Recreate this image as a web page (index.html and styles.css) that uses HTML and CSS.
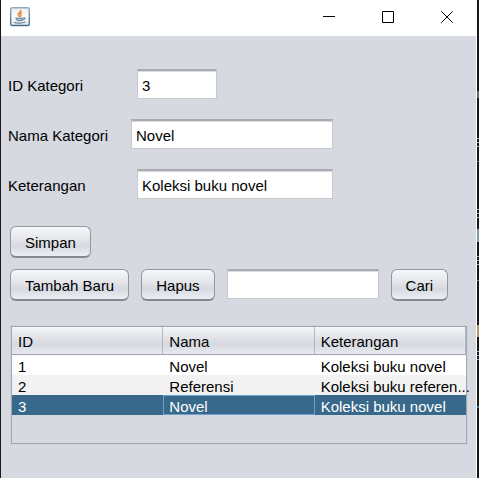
FILE: index.html
```html
<!DOCTYPE html>
<html lang="id">
<head>
<meta charset="utf-8">
<title>Kategori</title>
<link rel="stylesheet" href="styles.css">
</head>
<body>
<div class="window">
  <header class="titlebar">
    <svg class="app-icon" viewBox="0 0 20 20" aria-hidden="true">
      <defs>
        <linearGradient id="tile" x1="0" y1="0" x2="0" y2="1"><stop offset="0" stop-color="#ececec"/><stop offset="0.5" stop-color="#ffffff"/><stop offset="1" stop-color="#dfe4e8"/></linearGradient>
        <linearGradient id="edge" x1="0" y1="0" x2="0" y2="1"><stop offset="0" stop-color="#93a9b8"/><stop offset="1" stop-color="#48708b"/></linearGradient>
      </defs>
      <rect x="0.7" y="0.7" width="18.600" height="17.800" rx="1.5" fill="url(#tile)" stroke="url(#edge)" stroke-width="1.4"/>
      <path d="M10.6 3c1 2-2.8 2.800-2.400 4.600 .2 1 1.300 1.400 1.400 2.200M12 5.500c-1.600 .8-2.200 1.600-1.300 2.500 .5 .6 .1 1.200-.4 1.700" fill="none" stroke="#ee8a3c" stroke-width="1.600"/>
      <path d="M5.500 10.500h8v1.500c-.5 2-1.500 2.300-4 2.300s-3.300-.6-4-2.300z" fill="#7592a8"/>
      <path d="M13.500 10.600c2.200-.5 2 2-.8 2.400M4 15.300c2 1.200 9 1.200 11.500-.2" fill="none" stroke="#6c8da6" stroke-width="1.200"/>
      <path d="M7 12.300h5" stroke="#c6d4df" stroke-width=".8"/>
    </svg>
    <div class="controls">
      <button class="control" aria-label="Minimize"><svg viewBox="0 0 12 12"><path d="M0 5.500H12"/></svg></button>
      <button class="control" aria-label="Maximize"><svg viewBox="0 0 12 12"><path d="M.5 .5H11.500V11.500H.5Z"/></svg></button>
      <button class="control" aria-label="Close"><svg viewBox="0 0 12 12"><path d="M.3 .3L11.700 11.700M11.700 .3L.3 11.700"/></svg></button>
    </div>
  </header>
  <main class="content">
    <form class="form">
      <div class="row">
        <label class="label" for="id">ID Kategori</label>
        <input class="field field-id" id="id" type="text" value="3">
      </div>
      <div class="row">
        <label class="label label-short" for="nama">Nama Kategori</label>
        <input class="field field-wide" id="nama" type="text" value="Novel">
      </div>
      <div class="row">
        <label class="label" for="ket">Keterangan</label>
        <input class="field field-text" id="ket" type="text" value="Koleksi buku novel">
      </div>
    </form>
    <div class="actions">
      <button class="button" type="button">Simpan</button>
    </div>
    <div class="actions">
      <button class="button" type="button">Tambah Baru</button>
      <button class="button" type="button">Hapus</button>
      <input class="field field-search" type="text" aria-label="Cari">
      <button class="button" type="button">Cari</button>
    </div>
    <div class="table-pane">
      <table class="table">
        <thead>
          <tr><th>ID</th><th>Nama</th><th>Keterangan</th></tr>
        </thead>
        <tbody>
          <tr><td>1</td><td>Novel</td><td>Koleksi buku novel</td></tr>
          <tr><td>2</td><td>Referensi</td><td>Koleksi buku referen...</td></tr>
          <tr class="selected"><td>3</td><td class="focused">Novel</td><td>Koleksi buku novel</td></tr>
        </tbody>
      </table>
    </div>
  </main>
</div>
</body>
</html>
```

FILE: styles.css
```css
* {
  box-sizing: border-box;
}

/* The strip right of the window shows a sliver of the desktop behind it. */
body {
  margin: 0;
  padding: 0 2px 0 1px;
  background: linear-gradient(
    #17171a 91px, #666 91px 98px, #17171a 98px 138px,
    #aaa 138px 139px, #17171a 139px 142px, #aaa 142px 143px, #17171a 143px 146px,
    #aaa 146px 147px, #17171a 147px 161px, #867770 161px 162px, #17171a 162px 209px,
    #aaa 209px 210px, #17171a 210px 213px, #aaa 213px 214px, #17171a 214px 217px,
    #aaa 217px 218px, #17171a 218px 229px, #8098a8 229px 242px, #17171a 242px 256px,
    #aaa 256px 257px, #17171a 257px 260px, #aaa 260px 261px, #17171a 261px 264px,
    #aaa 264px 265px, #17171a 265px 280px, #777 280px 281px, #17171a 281px 325px,
    #b39a68 325px 337px, #17171a 337px 351px, #aaa 351px 352px, #17171a 352px 355px,
    #aaa 355px 356px, #17171a 356px 359px, #aaa 359px 360px, #17171a 360px 406px,
    #3f6d9c 406px 408px, #17171a 408px) right top / 2px 100% no-repeat #17171a;
  color: #000;
  font-family: "Liberation Sans", Arial, sans-serif;
  font-size: 15px;
  line-height: 20px;
}

.window {
  min-height: 100vh;
  background: #d6d9e0;
  border-right: 1px solid #fff;
}

.titlebar {
  display: flex;
  align-items: center;
  justify-content: space-between;
  height: 36px;
  padding-left: 9px;
  background: #fff;
}

.app-icon {
  width: 20px;
  height: 20px;
  margin-bottom: 2px;
}

.controls {
  display: flex;
  margin-bottom: 2px;
}

.control {
  display: flex;
  align-items: center;
  justify-content: center;
  width: 59px;
  height: 34px;
  padding: 0;
  border: 0;
  background: none;
}

.control svg {
  width: 12px;
  height: 12px;
  fill: none;
  stroke: #000;
  stroke-width: 1;
}

.content {
  padding: 33px 9px 0;
}

.form {
  display: flex;
  flex-direction: column;
  gap: 20px;
  margin: 0 0 27px -2px;
}

.row {
  display: flex;
  align-items: center;
}

.label {
  width: 129px;
  padding-top: 3px;
}

.label-short {
  width: 123px;
}

.field {
  height: 30px;
  padding: 2px 4px 0;
  border: 1px solid #c8cace;
  border-top: 2px solid #a9abb0;
  background: #fff;
  box-shadow: inset 0 1px 1px #d9d9db;
  color: #000;
  font: inherit;
  outline: 0;
}

.field-id {
  width: 80px;
}

.field-wide {
  width: 202px;
}

.field-text {
  width: 196px;
}

.field-search {
  width: 152px;
}

.actions {
  display: flex;
  gap: 12px;
  margin-bottom: 11px;
}

.button {
  height: 32px;
  padding: 4px 14px 2px;
  border: 1px solid #94979d;
  border-bottom: 2px solid #85888e;
  border-radius: 6px;
  background: linear-gradient(#f6f7f9, #e2e4e9 45%, #d6d9e0 65%, #eceef4);
  color: #000;
  font: inherit;
}

.table-pane {
  height: 118px;
  margin: 25px 0 0 1px;
  border: 1px solid #a1a6b0;
  box-shadow: 0 0 1px #b4b8c1;
}

.table {
  width: 100%;
  table-layout: fixed;
  border-collapse: separate;
  border-spacing: 0;
}

.table th {
  height: 28px;
  padding: 3px 6px 0;
  border-right: 1px solid #b4b8c0;
  border-bottom: 1px solid #9ca1aa;
  background: linear-gradient(#f5f6f8, #dfe1e6 45%, #d6d9e0 65%, #e8eaf0);
  font-weight: normal;
  text-align: left;
}

.table td {
  height: 20px;
  padding: 3px 0 0 6px;
  background: #fff;
  line-height: 17px;
  white-space: nowrap;
}

.table tr:nth-child(2) td {
  background: #f2f2f2;
}

.table .selected td {
  background: #39698a;
  color: #fff;
}

.table .selected .focused {
  box-shadow: inset 0 0 0 1px #6c9fd2;
}
```
